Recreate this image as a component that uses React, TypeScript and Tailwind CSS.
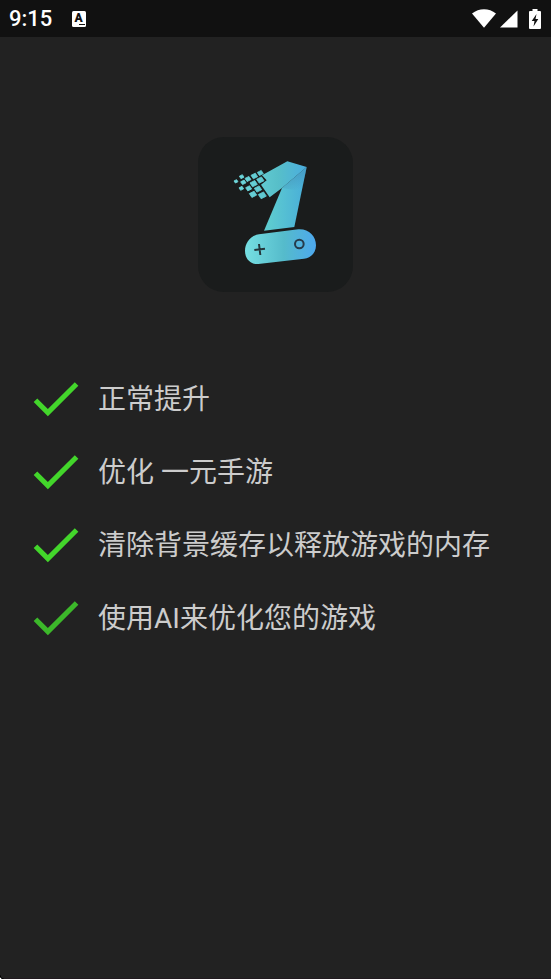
const steps = [
  { text: "正常提升", color: "text-[#43d62b]" },
  { text: "优化 一元手游", color: "text-[#43d62b]" },
  { text: "清除背景缓存以释放游戏的内存", color: "text-[#43d62b]" },
  { text: "使用AI来优化您的游戏", color: "text-[#3cb82a]" },
];

// centre x, centre y, half width
const pixels = [
  [138, 154, 6],
  [155, 140, 7],
  [160, 157, 8],
  [154, 175, 7],
  [174, 147, 9],
  [176, 175, 9],
  [193, 138, 10],
  [191, 161, 11],
  [189, 193, 11],
  [211, 129, 9],
  [211, 150, 11],
  [204, 177, 11],
  [217, 196, 12],
];

function StatusBar() {
  return (
    <header className="flex h-[37px] items-center justify-between bg-[#111111] px-[9px] text-white">
      <div className="flex items-center gap-[19px]">
        <span className="font-['Roboto',sans-serif] text-[22px] leading-7 font-medium">9:15</span>
        <svg viewBox="0 0 16 18" className="h-[18px] w-4" aria-hidden="true">
          <rect x="1" y="1" width="14" height="16" rx="1.5" fill="currentColor" />
          <text
            x="7.5"
            y="12"
            textAnchor="middle"
            className="fill-[#111111] font-['Roboto',sans-serif] text-[12px] font-black"
          >
            A
          </text>
          <path d="M8 14.5H14" stroke="#111111" strokeWidth="1" />
        </svg>
      </div>
      <div className="flex items-center">
        <svg viewBox="0 0 24 19" className="mr-1 h-[19px] w-6" aria-hidden="true">
          <path d="M0 4.5C7-1.2 17-1.2 24 4.5L12 18.7z" fill="currentColor" />
        </svg>
        <svg viewBox="0 0 18 18" className="mr-[10px] h-[18px] w-[18px]" aria-hidden="true">
          <path d="M0 17.5H17.5V0.5z" fill="currentColor" />
        </svg>
        <svg viewBox="0 0 14 20" className="h-5 w-[14px]" aria-hidden="true">
          <path d="M4.5 0h5v2H12q1 0 1 1v16q0 1-1 1H2q-1 0-1-1V3q0-1 1-1h2.5z" fill="currentColor" />
          <path d="M8.5 5 3.7 12h2.8l-1 5.5L10.3 10H7.5z" fill="#111111" />
        </svg>
      </div>
    </header>
  );
}

function Logo() {
  return (
    <div className="size-[155px] overflow-hidden rounded-[26px] bg-[#1a1c1c]">
      <svg viewBox="24 21 465 465" className="size-full" role="img" aria-label="一元手游">
        <defs>
          <linearGradient id="digit" gradientUnits="userSpaceOnUse" x1="135" y1="0" x2="350" y2="0">
            <stop offset="0" stopColor="#6fd9dd" />
            <stop offset="0.6" stopColor="#57bfc9" />
            <stop offset="1" stopColor="#4aaddf" />
          </linearGradient>
          <linearGradient id="stem" gradientUnits="userSpaceOnUse" x1="240" y1="230" x2="345" y2="230">
            <stop offset="0" stopColor="#5dcbd0" />
            <stop offset="1" stopColor="#49aed8" />
          </linearGradient>
          <linearGradient id="fold" gradientUnits="userSpaceOnUse" x1="308" y1="145" x2="325" y2="180">
            <stop offset="0" stopColor="#438fb8" stopOpacity="0.45" />
            <stop offset="1" stopColor="#438fb8" stopOpacity="0" />
          </linearGradient>
          <linearGradient id="pad" gradientUnits="userSpaceOnUse" x1="165" y1="0" x2="378" y2="0">
            <stop offset="0" stopColor="#76dfe2" />
            <stop offset="0.55" stopColor="#55bbcb" />
            <stop offset="1" stopColor="#4da8ee" />
          </linearGradient>
        </defs>
        <g fill="url(#digit)">
          {pixels.map(([x, y, r]) => (
            <path
              key={`${x}-${y}`}
              d={`M${x - r} ${y - r * 0.2}L${x + r * 0.3} ${y - r * 0.85}L${x + r} ${y + r * 0.2}L${x - r * 0.3} ${y + r * 0.85}z`}
              stroke="url(#digit)"
              strokeWidth="2.5"
              strokeLinejoin="round"
            />
          ))}
          <path d="M216 136 292 94 350 111 276 174 239 202 213 164 230 151z" />
        </g>
        <path d="M350 111 313 291 222 302 276 174z" fill="url(#stem)" />
        <path d="M350 111 335 184 276 174z" fill="url(#fold)" />
        <path
          d="M207 313 325 298C356 296 378 318 378 346C378 369 362 384 342 386L205 402C181 404 165 386 165 363C165 339 181 317 207 313z"
          fill="url(#pad)"
        />
        <path d="M193 360 225 356M207 342 211 375" fill="none" stroke="#24363b" strokeWidth="6" />
        <circle cx="328" cy="342" r="13" fill="none" stroke="#263b4b" strokeWidth="6" />
      </svg>
    </div>
  );
}

function CheckMark({ className }: { className: string }) {
  return (
    <svg viewBox="0 0 24 24" className={`size-[61px] shrink-0 ${className}`} aria-hidden="true">
      <path d="M9 16.17 4.83 12l-1.42 1.41L9 19 21 7l-1.41-1.41z" fill="currentColor" />
    </svg>
  );
}

export default function App() {
  return (
    <div className="relative min-h-screen border-b border-[#211a1f] bg-[#222222]">
      <StatusBar />
      <main>
        <div className="flex justify-center pt-[100px]">
          <Logo />
        </div>
        <ul className="mt-[76px] flex flex-col gap-3 px-[25px]">
          {steps.map((step) => (
            <li key={step.text} className="flex items-center gap-3">
              <CheckMark className={step.color} />
              <span className="pt-0.5 font-['Roboto','Noto_Sans_CJK_SC',sans-serif] text-[28px] leading-10 text-[#cccccc]">
                {step.text}
              </span>
            </li>
          ))}
        </ul>
      </main>
      <svg viewBox="0 0 4 4" className="absolute -bottom-px left-0 size-1" aria-hidden="true">
        <path d="M0 0Q0 4 4 4H0z" fill="#ffffff" />
        <path d="M0 0Q0 4 4 4" fill="none" stroke="#000000" />
      </svg>
    </div>
  );
}
